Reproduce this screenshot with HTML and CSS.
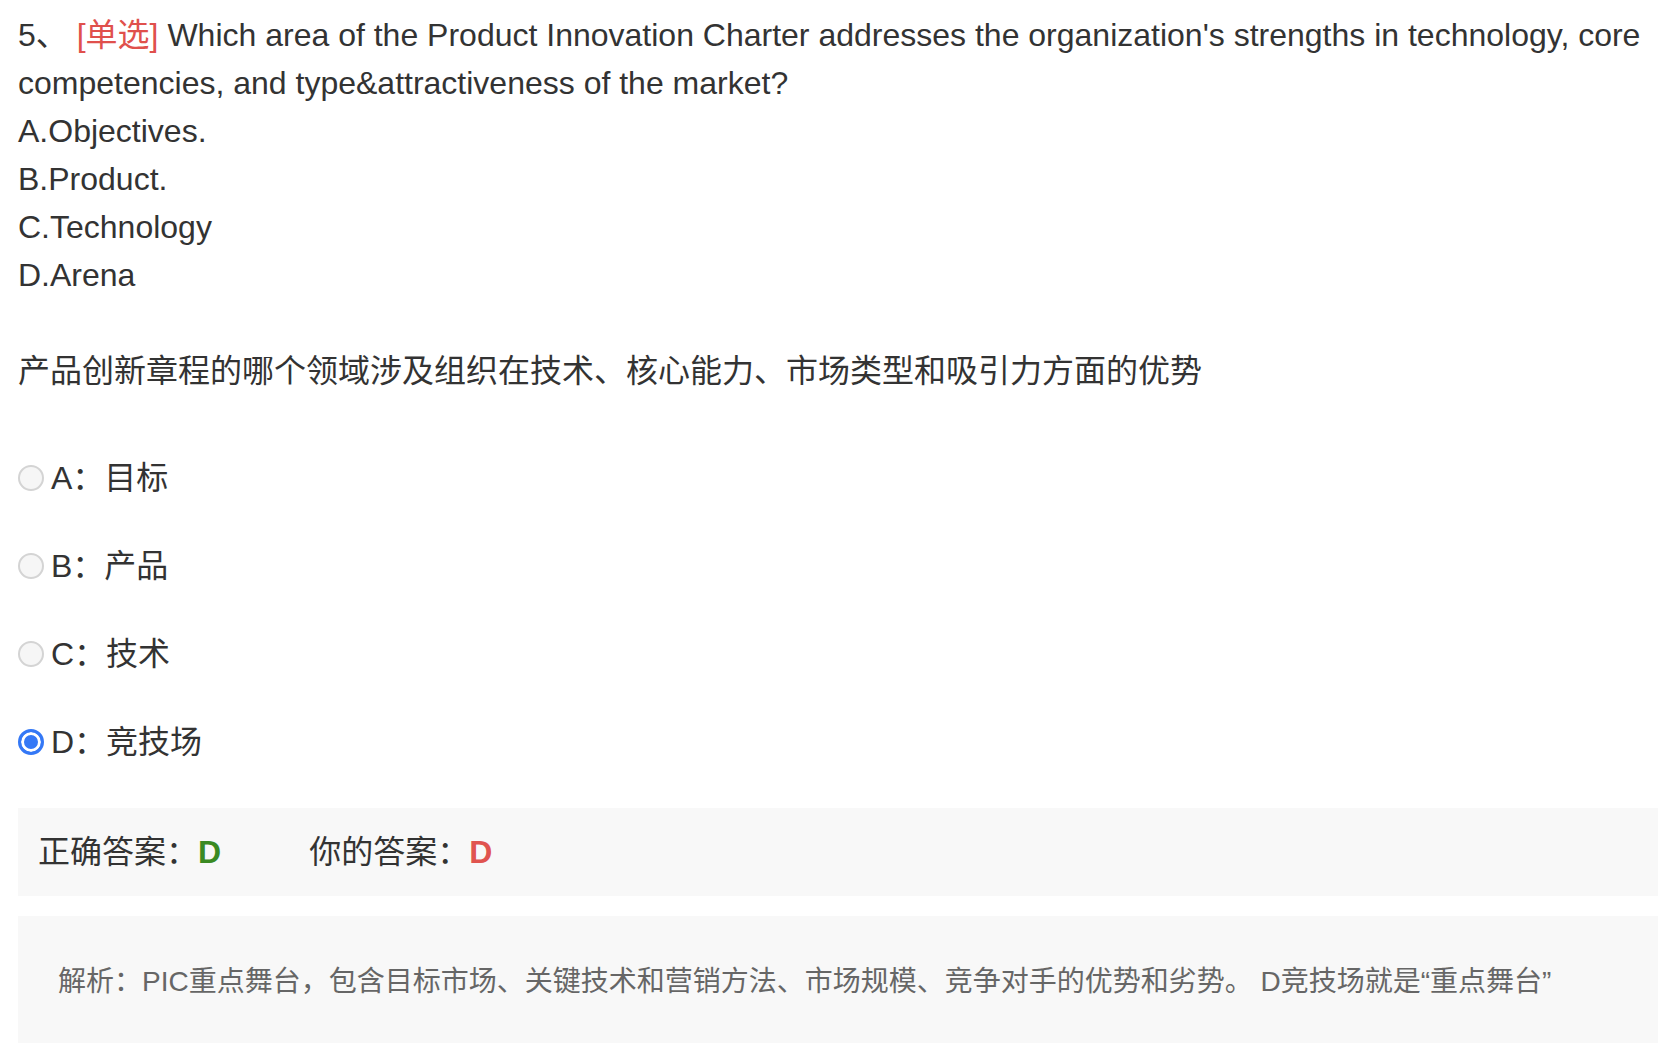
FILE: index.html
```html
<!DOCTYPE html>
<html lang="zh-CN">
<head>
<meta charset="utf-8">
<title>单选题</title>
<link rel="stylesheet" href="styles.css">
</head>
<body>
<div class="question">
  <div class="stem">
    <p class="line">5、 <span class="type">[单选]</span> Which area of the Product Innovation Charter addresses the organization's strengths in technology, core competencies, and type&amp;attractiveness of the market?</p>
    <p class="line">A.Objectives.</p>
    <p class="line">B.Product.</p>
    <p class="line">C.Technology</p>
    <p class="line">D.Arena</p>
    <p class="line zh">产品创新章程的哪个领域涉及组织在技术、核心能力、市场类型和吸引力方面的优势</p>
  </div>
  <div class="options">
    <label class="option"><input type="radio" name="q5" disabled><span>A：目标</span></label>
    <label class="option"><input type="radio" name="q5" disabled><span>B：产品</span></label>
    <label class="option"><input type="radio" name="q5" disabled><span>C：技术</span></label>
    <label class="option"><input type="radio" name="q5" checked disabled><span>D：竞技场</span></label>
  </div>
  <div class="answer-box">
    <span class="answer correct-answer">正确答案：<b class="ok">D</b></span>
    <span class="answer my-answer">你的答案：<b class="mine">D</b></span>
  </div>
  <div class="analysis">解析：PIC重点舞台，包含目标市场、关键技术和营销方法、市场规模、竞争对手的优势和劣势。 D竞技场就是“重点舞台”</div>
</div>
</body>
</html>
```
FILE: styles.css
```css
html, body {
  margin: 0;
  padding: 0;
  background: #ffffff;
}
body {
  font-family: "Liberation Sans", "Noto Sans CJK SC", sans-serif;
  color: #333333;
  font-size: 32px;
  line-height: 48px;
}
.question {
  padding: 11px 16px 0 18px;
}
.stem .line {
  margin: 0;
}
.stem .zh {
  margin-top: 48px;
}
.type {
  color: #e0504c;
}
.options {
  display: flex;
  flex-direction: column;
  gap: 40px;
  margin-top: 59px;
}
.option {
  display: flex;
  align-items: center;
  height: 48px;
}
.option input {
  appearance: none;
  -webkit-appearance: none;
  margin: 0 7px 0 0;
  width: 26px;
  height: 26px;
  box-sizing: border-box;
  border-radius: 50%;
  border: 2px solid #d4d4d4;
  background: #f6f6f6;
  flex: none;
}
.option input:checked {
  border: 3px solid #3478f6;
  background: #3478f6;
  box-shadow: inset 0 0 0 3px #ffffff;
}
.answer-box {
  margin-top: 42px;
  background: #f8f8f8;
  height: 88px;
  box-sizing: border-box;
  padding: 20px 20px;
  display: flex;
  align-items: center;
}
.answer {
  white-space: nowrap;
}
.correct-answer {
  margin-right: 88px;
}
.ok {
  color: #3a8a22;
}
.mine {
  color: #e0544f;
}
.analysis {
  margin-top: 20px;
  background: #f8f8f8;
  padding: 42px 40px 37px 40px;
  font-size: 28px;
  line-height: 48px;
  color: #666666;
}
```
